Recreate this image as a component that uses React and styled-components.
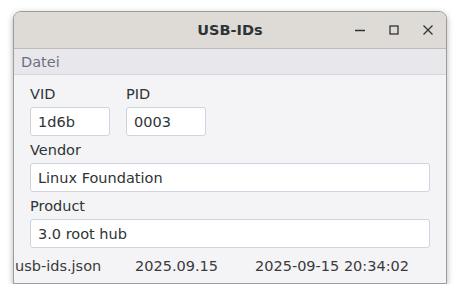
import React from "react"
import styled, { createGlobalStyle } from "styled-components"

const GlobalStyle = createGlobalStyle`
  html, body {
    margin: 0;
    padding: 0;
    background: #ffffff;
  }
  * {
    box-sizing: border-box;
  }
`

export default function App() {
  return (
    <>
      <GlobalStyle />
      <Window>
        <TitleBar>
          <Title>USB-IDs</Title>
          <Controls>
            <ControlButton aria-label="minimize">
              <svg width="12" height="12" viewBox="0 0 12 12">
                <path d="M1 6.5h10" stroke="#2e3436" strokeWidth="1.3" />
              </svg>
            </ControlButton>
            <ControlButton aria-label="maximize">
              <svg width="12" height="12" viewBox="0 0 12 12">
                <rect x="2" y="2" width="8" height="8" fill="none" stroke="#2e3436" strokeWidth="1.3" />
              </svg>
            </ControlButton>
            <ControlButton aria-label="close">
              <svg width="12" height="12" viewBox="0 0 12 12">
                <path d="M1.5 1.5l9 9M10.5 1.5l-9 9" stroke="#2e3436" strokeWidth="1.3" />
              </svg>
            </ControlButton>
          </Controls>
        </TitleBar>
        <MenuBar>
          <MenuItem>Datei</MenuItem>
        </MenuBar>
        <Content>
          <IdRow>
            <Field>
              <Label>VID</Label>
              <Input $width={80}>1d6b</Input>
            </Field>
            <Field>
              <Label>PID</Label>
              <Input $width={80}>0003</Input>
            </Field>
          </IdRow>
          <Field>
            <Label>Vendor</Label>
            <Input>Linux Foundation</Input>
          </Field>
          <Field>
            <Label>Product</Label>
            <Input>3.0 root hub</Input>
          </Field>
        </Content>
        <StatusBar>
          <StatusItem>usb-ids.json</StatusItem>
          <StatusItem>2025.09.15</StatusItem>
          <StatusItem>2025-09-15 20:34:02</StatusItem>
        </StatusBar>
      </Window>
    </>
  )
}

const Window = styled.div`
  margin: 11px 0 0 13px;
  width: 434px;
  height: 273px;
  display: flex;
  flex-direction: column;
  background: #f4f4f6;
  border: 1px solid #9c9c9c;
  border-radius: 8px 8px 0 0;
  box-shadow: 0 2px 6px rgba(0, 0, 0, 0.3);
  overflow: hidden;
  font-family: "DejaVu Sans", sans-serif;
  font-size: 14.5px;
  color: #2e3436;
`

const TitleBar = styled.div`
  position: relative;
  height: 37px;
  flex: none;
  display: flex;
  align-items: center;
  justify-content: center;
  background: #dedbd7;
  border-bottom: 1px solid #c2bdb8;
`

const Title = styled.div`
  font-weight: bold;
  font-size: 14.5px;
  color: #2e3436;
`

const Controls = styled.div`
  position: absolute;
  right: 1px;
  top: 0;
  height: 100%;
  display: flex;
  align-items: center;
`

const ControlButton = styled.div`
  width: 34px;
  height: 24px;
  display: flex;
  align-items: center;
  justify-content: center;
`

const MenuBar = styled.div`
  height: 26px;
  flex: none;
  display: flex;
  align-items: center;
  padding-left: 7px;
  background: #e8e8ec;
  border-bottom: 1px solid #d6d6da;
`

const MenuItem = styled.div`
  color: #6c7080;
`

const Content = styled.div`
  display: flex;
  flex-direction: column;
  gap: 5px;
  padding: 10px 16px 0 16px;
`

const IdRow = styled.div`
  display: flex;
  gap: 16px;
`

const Field = styled.div`
  display: flex;
  flex-direction: column;
  gap: 3px;
`

const Label = styled.div`
  height: 19px;
  line-height: 19px;
  color: #2e3436;
`

const Input = styled.div`
  width: ${(p) => (p.$width ? `${p.$width}px` : "100%")};
  height: 29px;
  display: flex;
  align-items: center;
  padding: 0 7px;
  background: #ffffff;
  border: 1px solid #cdd3e0;
  border-radius: 3px;
  color: #2e3436;
`

const StatusBar = styled.div`
  display: flex;
  padding: 10px 0 0 1px;
`

const StatusItem = styled.div`
  width: 120px;
  flex: none;
  white-space: nowrap;
  color: #3a3a3a;
`
